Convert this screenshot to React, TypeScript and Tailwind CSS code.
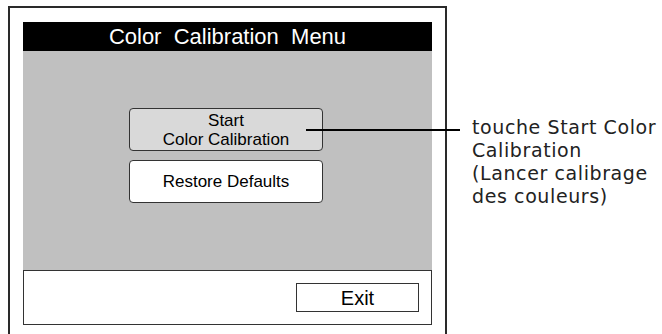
export default function App() {
  return (
    <div className="w-[662px] h-[334px] bg-white overflow-hidden flex items-start relative">
      <div className="ml-[8px] mt-[6px] w-[439px] h-[340px] border-x-2 border-t-2 border-[#2a2a2a] px-[13px] pt-[14px] shrink-0">
        <div className="h-[29px] bg-black text-white flex items-center justify-center text-[22px] whitespace-pre" style={{ fontFamily: '"Liberation Sans", Arial, sans-serif' }}>
          {"Color  Calibration  Menu"}
        </div>
        <div className="h-[219px] bg-[#c0c0c0] flex flex-col items-center pt-[57px] gap-[9px] pr-[3px]" style={{ fontFamily: '"Liberation Sans", Arial, sans-serif' }}>
          <div className="w-[194px] h-[43px] rounded-[4px] border border-[#333] bg-[#d9d9d9] flex flex-col items-center justify-center text-[17px] leading-[19px] text-black">
            <span>Start</span>
            <span>Color Calibration</span>
          </div>
          <div className="w-[194px] h-[43px] rounded-[4px] border border-[#333] bg-white flex items-center justify-center text-[17px] text-black">
            Restore Defaults
          </div>
        </div>
        <div className="h-[55px] border border-[#333] bg-white flex items-center justify-end pr-[12px]" style={{ fontFamily: '"Liberation Sans", Arial, sans-serif' }}>
          <div className="w-[123px] h-[29px] border border-[#333] flex items-center justify-center text-[20px] text-black">Exit</div>
        </div>
      </div>
      <div className="absolute left-[306px] top-[129px] w-[154px] h-[2px] bg-black" />
      <div className="ml-[25px] mt-[116px] text-[19px] leading-[23px] tracking-[0.6px] text-[#222] whitespace-nowrap" style={{ fontFamily: '"DejaVu Sans", sans-serif' }}>
        <div>touche Start Color</div>
        <div>Calibration</div>
        <div>(Lancer calibrage</div>
        <div>des couleurs)</div>
      </div>
    </div>
  );
}
